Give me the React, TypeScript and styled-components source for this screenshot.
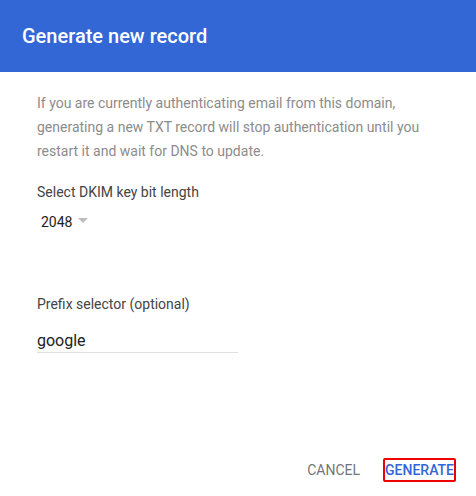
import React from "react";
import styled, {createGlobalStyle} from "styled-components";

const GlobalStyle = createGlobalStyle`
  html, body {
    margin: 0;
    padding: 0;
    background: #ffffff;
  }

  body {
    font-family: Roboto, "Liberation Sans", Arial, sans-serif;
    -webkit-font-smoothing: antialiased;
  }
`;

export default function App() {
  return (
    <>
      <GlobalStyle/>
      <Dialog>
        <Header>
          <Title>Generate new record</Title>
        </Header>

        <Body>
          <Notice>
            If you are currently authenticating email from this domain,
            generating a new TXT record will stop authentication until you
            restart it and wait for DNS to update.
          </Notice>

          <Field>
            <Label>Select DKIM key bit length</Label>
            <Select>
              <SelectValue>2048</SelectValue>
              <Caret/>
            </Select>
          </Field>

          <Field spaced>
            <Label>Prefix selector (optional)</Label>
            <Input defaultValue="google"/>
          </Field>
        </Body>

        <Footer>
          <Button>CANCEL</Button>
          <Button primary>GENERATE</Button>
        </Footer>
      </Dialog>
    </>
  );
}

const Dialog = styled.div`
  display: flex;
  flex-direction: column;
  width: 476px;
  height: 496px;
  background: #ffffff;
`;

const Header = styled.div`
  display: flex;
  align-items: center;
  height: 72px;
  padding: 0 22px;
  background-color: #3367d6;
  box-sizing: border-box;
`;

const Title = styled.h1`
  margin: 0 0 1px;
  color: #ffffff;
  font-size: 20px;
  font-weight: 500;
  line-height: 28px;
`;

const Body = styled.div`
  flex: 1;
  display: flex;
  flex-direction: column;
  padding: 19px 37px 0;
`;

const Notice = styled.p`
  margin: 0;
  max-width: 400px;
  color: #8c8c8c;
  font-size: 14px;
  line-height: 24px;
`;

const Field = styled.div<{spaced?: boolean}>`
  display: flex;
  flex-direction: column;
  margin-top: ${({spaced}) => spaced ? "62px" : "19px"};
`;

const Label = styled.label`
  color: #444444;
  font-size: 14px;
  line-height: 20px;
`;

const Select = styled.div`
  display: flex;
  align-items: center;
  gap: 6px;
  margin-top: 10px;
  padding-left: 4px;
  height: 20px;
`;

const SelectValue = styled.span`
  color: #222222;
  font-size: 14px;
  line-height: 20px;
`;

const Caret = styled.span`
  width: 0;
  height: 0;
  margin-top: -3px;
  border-left: 5px solid transparent;
  border-right: 5px solid transparent;
  border-top: 5px solid #bdbdbd;
`;

const Input = styled.input`
  width: 201px;
  height: 25px;
  margin-top: 14px;
  padding: 0;
  border: none;
  border-bottom: 1px solid #e0e0e0;
  outline: none;
  color: #212121;
  font-family: inherit;
  font-size: 16px;
  line-height: 24px;
  box-sizing: border-box;
`;

const Footer = styled.div`
  display: flex;
  justify-content: flex-end;
  align-items: center;
  gap: 21px;
  padding: 0 20px 14px;
`;

const Button = styled.button<{primary?: boolean}>`
  height: 24px;
  padding: 0;
  border: 2px solid ${({primary}) => primary ? "#ee0000" : "transparent"};
  border-radius: 2px;
  background: none;
  color: ${({primary}) => primary ? "#3367d6" : "#757575"};
  font-family: inherit;
  font-size: 14px;
  font-weight: ${({primary}) => primary ? 500 : 400};
  line-height: 20px;
  cursor: pointer;
  box-sizing: border-box;
`;
